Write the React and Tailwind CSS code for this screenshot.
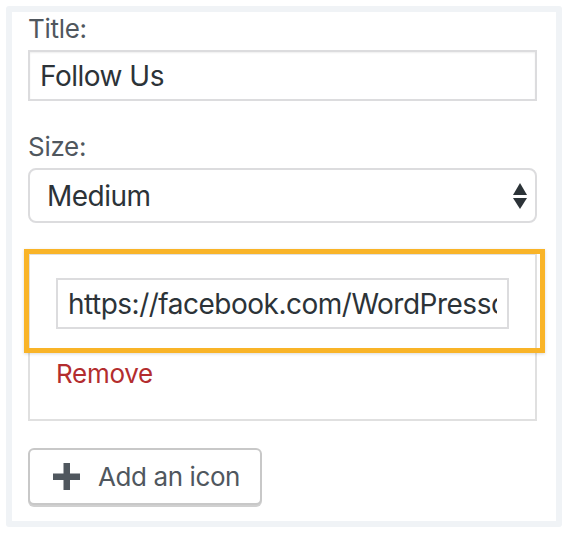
import React from "react";

const font = { fontFamily: "Inter, 'Liberation Sans', sans-serif" };

const App = () => {
  return (
    <div className="w-[570px] h-[537px] bg-white p-[6px]" style={font}>
      <div className="w-[556px] h-[521px] rounded-[3px] border-[6px] border-[#f0f3f6] bg-white pl-[16px] pr-[19px] pt-[2px]">
        {/* Title */}
        <label className="block text-[26px] leading-[30px] tracking-[-0.3px] text-[#50575e] mb-[6px]">Title:</label>
        <div className="h-[51px] border-2 border-[#dcdcde] shadow-[inset_0_1px_2px_rgba(0,0,0,0.07)] flex items-center px-[10px]">
          <span className="text-[28px] tracking-[-0.5px] text-[#2c3338]">Follow Us</span>
        </div>

        {/* Size */}
        <label className="block text-[26px] leading-[30px] tracking-[-0.3px] text-[#50575e] mt-[31px] mb-[6px]">Size:</label>
        <div className="h-[55px] border-2 border-[#dcdcde] rounded-[8px] flex items-center justify-between pl-[17px] pr-[8px]">
          <span className="text-[28px] tracking-[-0.5px] text-[#2c3338]">Medium</span>
          <svg width="14" height="26" viewBox="0 0 14 26">
            <polygon points="7,0 14,12 0,12" fill="#2c3338" />
            <polygon points="0,15 14,15 7,26" fill="#2c3338" />
          </svg>
        </div>

        {/* Icon item */}
        <div className="relative mt-[30px] h-[168px] border-2 border-[#e0e0e0] px-[26px] pt-[23px]">
          <div className="h-[51px] border-2 border-[#dcdcde] flex items-center pl-[10px] pr-[10px]">
            <div className="w-full overflow-hidden">
              <span className="text-[28px] tracking-[-0.5px] text-[#2c3338] whitespace-nowrap">https://facebook.com/WordPressdotcom</span>
            </div>
          </div>
          <div className="mt-[30px] text-[26px] leading-[30px] tracking-[-0.3px] text-[#b32d2e]">Remove</div>
          <div className="absolute left-[-6px] top-[-6px] w-[521px] h-[104px] border-[5px] border-[#f9b428] shadow-[0_1px_3px_rgba(0,0,0,0.15)]" />
        </div>

        {/* Add button */}
        <button className="mt-[27px] w-[234px] h-[57px] rounded-[6px] border-2 border-[#c8c8c8] shadow-[0_2px_0_#d0d0d0] bg-white flex items-center gap-[18px] pl-[23px] text-[#50575e]">
          <svg width="27" height="27" viewBox="0 0 27 27">
            <rect x="10.5" y="0" width="6.5" height="27" fill="#50575e" />
            <rect x="0" y="10.5" width="27" height="6.5" fill="#50575e" />
          </svg>
          <span className="text-[26px] tracking-[-0.4px]">Add an icon</span>
        </button>
      </div>
    </div>
  );
};

export default App;
